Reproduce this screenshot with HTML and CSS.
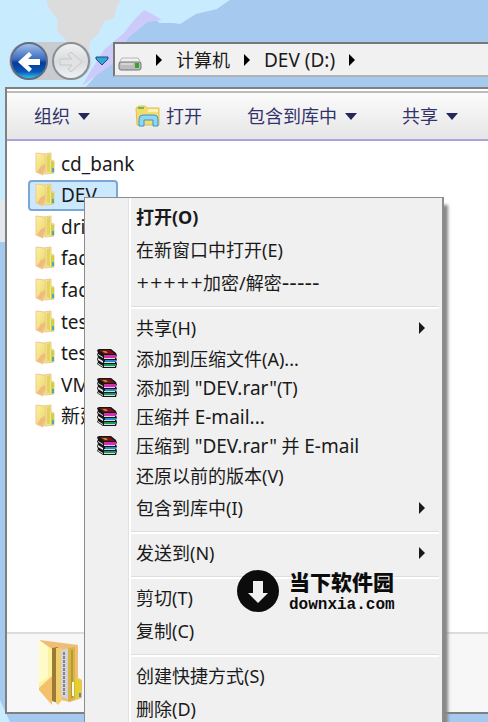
FILE: index.html
```
<!DOCTYPE html>
<html lang="zh-CN">
<head>
    <meta charset="utf-8">
    <title>DEV (D:)</title>
    <link rel="stylesheet" href="styles.css">
</head>
<body>

<!-- shared icons -->
<svg class="defs" width="0" height="0">
    <defs>
        <linearGradient id="yellow" x1="0" y1="0" x2="1" y2="1">
            <stop offset="0" stop-color="#fbf3a4"/>
            <stop offset="1" stop-color="#e8d264"/>
        </linearGradient>
        <symbol id="folder" viewBox="0 0 20 24">
            <path d="M9 2l7-1v7l3 1v12l-9 1z" fill="#f0e596" stroke="#efc98c"/>
            <path d="M12 3l3-1v18h-3z" fill="#e2d65a"/>
            <path d="M1 1l8 1 2 3v12l-3 6-7-3z" fill="url(#yellow)" stroke="#f3c890"/>
            <path d="M2 20l4-6 4-2v4l-3 6z" fill="#eebb80"/>
            <path d="M16 9l3 1v11h-3z" fill="#cfcf4c"/>
            <path d="M17 16h2v4h-2z" fill="#49a9b4"/>
        </symbol>
        <symbol id="rar" viewBox="0 0 20 20">
            <path d="M0 1l2-1h12l5 4 1 3-1 1 1 3-1 1 1 3-1 4H6l-6-4 1-2-1-3 1-2-1-3 1-1z" fill="#151515"/>
            <path d="M2 1h11l5 4H7z" fill="#7c0f1c"/>
            <path d="M5 2h4l2 2H8z" fill="#a79a1e"/>
            <path d="M7 6h12v3H7z" fill="#d42fae"/>
            <path d="M8 11h11v2H8z" fill="#2d86cf"/>
            <path d="M7 15h12v2H7z" fill="#179a5c"/>
            <path d="M1 5l5 3v1L1 6zM1 9l5 3v2l-5-3zM1 14l5 3v1l-5-3z" fill="#e9e9e9"/>
            <path d="M7 9h11v1H7zM7 13h11v1H7zM7 17h11v1H7z" fill="#cfdfe4"/>
        </symbol>
    </defs>
</svg>

<div class="desktop">
    <svg class="wallpaper" width="488" height="722" viewBox="0 0 488 722">
        <path d="M0 0H230L218 8 196 13 181 23 160 23 147 14 130 34 112 48 104 66 92 80 85 88H0z" fill="#c9ebfe"/>
        <path d="M153 0H228L217 9 196 14 180 24 160 21 150 10z" fill="#c9ebfe"/>
        <path d="M46 0H121L117 6 114 18 104 22 98 34 90 42 88 60H73L66 40 57 31 58 20 50 10z" fill="#dcdcdc"/>
        <path d="M144 10L152 14 162 20 148 22 138 30 128 38 118 60 90 80 82 86 90 72 104 50 124 33 134 20z" fill="#cccafa"/>
        <path d="M0 88h6v112H0z" fill="#c9ebfe"/>
        <path d="M0 200h6v42H0z" fill="#e4e8ee"/>
        <path d="M0 700l10 22H0z" fill="#c9ebfe"/>
    </svg>

    <div class="navbar">
        <div class="nav-buttons">
            <button class="nav-btn back" aria-label="后退">
                <svg width="38" height="38" viewBox="0 0 38 38">
                    <defs>
                        <linearGradient id="blue" x1="0" y1="0" x2="0" y2="1">
                            <stop offset="0" stop-color="#a9c4ea"/>
                            <stop offset=".45" stop-color="#3a6cc0"/>
                            <stop offset=".55" stop-color="#063a98"/>
                            <stop offset=".8" stop-color="#0a58b8"/>
                            <stop offset="1" stop-color="#35d2f4"/>
                        </linearGradient>
                    </defs>
                    <circle cx="19" cy="19" r="18" fill="url(#blue)" stroke="#5f6d85" stroke-width="2"/>
                    <path d="M8 20L19 10l3 3-4 4h12v6H18l4 4-3 3z" fill="#fff"/>
                </svg>
            </button>
            <button class="nav-btn" aria-label="前进">
                <svg width="38" height="38" viewBox="0 0 38 38">
                    <defs>
                        <linearGradient id="gray" x1="0" y1="0" x2="0" y2="1">
                            <stop offset="0" stop-color="#f2f2f2"/>
                            <stop offset=".5" stop-color="#d9dbde"/>
                            <stop offset="1" stop-color="#f0f2f4"/>
                        </linearGradient>
                    </defs>
                    <circle cx="19" cy="19" r="18" fill="url(#gray)" stroke="#8b8f94" stroke-width="2"/>
                    <path d="M30 20L19 10l-3 3 4 4H8v6h12l-4 4 3 3z" fill="#e2e2e2" stroke="#c6c8ca"/>
                </svg>
            </button>
        </div>
        <svg class="history" width="14" height="10" viewBox="0 0 14 10">
            <path d="M1 1h12v2L7 9 1 3z" fill="#35a6d8" stroke="#1d4a7c"/>
        </svg>
        <div class="address">
            <svg width="24" height="14" viewBox="0 0 24 14">
                <path d="M4 1h16l3 5H1z" fill="#f1f1f1" stroke="#b5b5b5"/>
                <rect x="1" y="5" width="22" height="8" rx="2" fill="#bcbcbc" stroke="#777"/>
                <path d="M3 7h12" stroke="#eee"/>
                <rect x="17" y="6" width="4" height="5" fill="#35a52e"/>
            </svg>
            <i class="arrow"></i>
            <span>计算机</span>
            <i class="arrow"></i>
            <span class="latin">DEV (D:)</span>
            <i class="arrow"></i>
        </div>
    </div>

    <div class="window">
        <div class="toolbar">
            <button>组织 <i class="caret"></i></button>
            <button class="open">
                <svg width="26" height="22" viewBox="0 0 26 22">
                    <path d="M1 3l3-2h6l2 2h12v17H2z" fill="#f3dc6c" stroke="#e0bd62"/>
                    <path d="M3 2h6v2H3z" fill="#6cc04a"/>
                    <path d="M13 4h10v3H13z" fill="#fbf3b0"/>
                    <path d="M4 21v-7q0-4 4-4h11q4 0 4 4v7h-5v-6H9v6z" fill="#8fd6f2" stroke="#3b97c4"/>
                </svg>
                打开
            </button>
            <button>包含到库中 <i class="caret"></i></button>
            <button>共享 <i class="caret"></i></button>
        </div>

        <ul class="files">
            <li><svg class="icon"><use href="#folder"/></svg>cd_bank</li>
            <li class="selected"><svg class="icon"><use href="#folder"/></svg>DEV</li>
            <li><svg class="icon"><use href="#folder"/></svg>dri</li>
            <li><svg class="icon"><use href="#folder"/></svg>fac</li>
            <li><svg class="icon"><use href="#folder"/></svg>fac</li>
            <li><svg class="icon"><use href="#folder"/></svg>tes</li>
            <li><svg class="icon"><use href="#folder"/></svg>tes</li>
            <li><svg class="icon"><use href="#folder"/></svg>VM</li>
            <li><svg class="icon"><use href="#folder"/></svg>新建</li>
        </ul>

        <div class="details">
            <svg width="46" height="70" viewBox="0 0 46 70">
                <path d="M2 2l38 5v33l4 2v18l-12 4-18-4z" fill="#f0bd78"/>
                <path d="M14 10l6-1v56l-6-2z" fill="#9a7a34"/>
                <path d="M18 10l6 0v52l-4 5-2-2z" fill="#f0cf6c"/>
                <path d="M23 12l8-2v52l-8-4z" fill="#d4d4d8"/>
                <path d="M26 14v44" stroke="#85858c" stroke-width="2" stroke-dasharray="3 1"/>
                <path d="M30 10l7-1v52l-7 3z" fill="#d5b548"/>
                <path d="M34 12v48" stroke="#b99a2c" stroke-width="2"/>
                <path d="M37 40l6 2v17l-6 2z" fill="#e4cf2c"/>
                <path d="M35 44v14" stroke="#fffbe8" stroke-width="2"/>
                <path d="M1 2l13 9v56L1 52z" fill="#fbf3a0"/>
                <path d="M1 50l13-12v29L1 52z" fill="#f3c06c"/>
                <path d="M1 2l9 7v30l-9 6z" fill="#fefbc8"/>
                <path d="M41 55h2v4h-2z" fill="#4d8bd0"/>
            </svg>
        </div>
    </div>

    <div class="menu" role="menu">
        <button class="item default">打开(O)</button>
        <button class="item">在新窗口中打开(E)</button>
        <button class="item"><span class="plus">+++++</span>加密/解密<span class="dash">-----</span></button>
        <hr>
        <button class="item sub">共享(H)</button>
        <button class="item rar"><svg><use href="#rar"/></svg><span>添加到压缩文件(A)...</span></button>
        <button class="item rar"><svg><use href="#rar"/></svg><span>添加到 <span class="latin">"DEV.rar"</span>(T)</span></button>
        <button class="item rar"><svg><use href="#rar"/></svg><span>压缩并 <span class="latin">E-mail...</span></span></button>
        <button class="item rar"><svg><use href="#rar"/></svg><span>压缩到 <span class="latin">"DEV.rar"</span> 并 <span class="latin">E-mail</span></span></button>
        <button class="item versions">还原以前的版本(V)</button>
        <button class="item sub">包含到库中(I)</button>
        <hr>
        <button class="item sub">发送到(N)</button>
        <hr>
        <button class="item">剪切(T)</button>
        <button class="item">复制(C)</button>
        <hr>
        <button class="item">创建快捷方式(S)</button>
        <button class="item">删除(D)</button>
    </div>

    <div class="watermark">
        <svg width="42" height="42" viewBox="0 0 42 42">
            <circle cx="21" cy="21" r="21" fill="#0c0c0c"/>
            <path d="M16 11h10v12h5L21 33 11 23h5z" fill="#f0f0f0"/>
        </svg>
        <div>
            <div class="site">当下软件园</div>
            <div class="url">downxia.com</div>
        </div>
    </div>
</div>

</body>
</html>
```

FILE: styles.css
```
* {
    box-sizing: border-box;
}

body {
    margin: 0;
    font-family: "Noto Sans", "Noto Sans CJK SC", sans-serif;
    font-size: 18px;
    line-height: 24px;
    color: #1a1a1a;
}

button {
    border: 0;
    padding: 0;
    background: none;
    color: inherit;
    font: inherit;
    white-space: nowrap;
}

.defs {
    position: absolute;
}

.desktop {
    position: relative;
    display: flex;
    flex-direction: column;
    height: 100vh;
    padding: 41px 0 8px 5px;
    overflow: hidden;
    background: #a6c9ef;
}

.wallpaper {
    position: absolute;
    left: 0;
    top: 0;
}

/* back, forward and the address bar */
.navbar {
    position: relative;
    display: flex;
    align-items: center;
    height: 40px;
    margin-bottom: 6px;
    padding-left: 4px;
}

.nav-buttons {
    display: flex;
    gap: 4px;
    padding: 0 1px;
    border-radius: 20px;
    background: #c8ccd0;
}

.nav-btn {
    width: 38px;
    height: 38px;
}

.nav-btn svg {
    display: block;
}

.history {
    margin: 0 4px;
}

.address {
    flex: 1;
    display: flex;
    align-items: center;
    height: 35px;
    margin-bottom: 3px;
    padding-left: 3px;
    border: 2px solid #777;
    border-right: 0;
    border-bottom-color: #b4b4b4;
    background: #f1f1f1;
    white-space: nowrap;
}

.address svg {
    margin-top: 8px;
}

.latin {
    font-size: 19px;
}

.arrow {
    margin: 0 14px;
    border: 6px solid transparent;
    border-left: 6px solid #000;
    border-right: 0;
}

.window {
    position: relative;
    flex: 1;
    display: flex;
    flex-direction: column;
    border: 2px solid #808080;
    border-right: 0;
    background: #fff;
}

.toolbar {
    display: flex;
    align-items: center;
    gap: 45px;
    height: 52px;
    padding: 4px 0 0 27px;
    border-bottom: 2px solid #aaa3d8;
    background: linear-gradient(#fff 2px, #bbb 2px, #bbb 4px, #fbfbfb 4px, #e6e6e6);
    color: #33336b;
}

.toolbar button {
    display: flex;
    align-items: center;
    gap: 8px;
}

.toolbar .open {
    gap: 5px;
}

.caret {
    border: 6px solid transparent;
    border-top: 7px solid #26265c;
    border-bottom: 0;
}

.files {
    display: grid;
    grid-template-rows: repeat(9, 1fr);
    height: 284px;
    margin: 7px 0 0 21px;
    padding: 0;
    list-style: none;
    font-size: 19px;
}

.files li {
    display: flex;
    align-items: center;
    gap: 6px;
    width: 90px;
    padding-left: 5px;
    border: 2px solid transparent;
    border-radius: 4px;
    white-space: nowrap;
}

.files .selected {
    border-color: #7ba6d8;
    background: #cce8fc;
}

.icon {
    flex-shrink: 0;
    width: 20px;
    height: 24px;
}

.details {
    height: 80px;
    margin-top: auto;
    padding: 4px 0 0 31px;
    border-top: 2px solid #dcdcdc;
    background: #f7f7f7;
}

/* context menu, lies over the window */
.menu {
    position: absolute;
    left: 84px;
    top: 197px;
    width: 360px;
    padding: 2px 3px 8px 2px;
    border: 1px solid #8c8c8c;
    border-width: 1px 2px 1px 1px;
    background: linear-gradient(90deg, #f0f0f0 43px, #e2e2e2 43px, #e2e2e2 44px, #fff 44px, #fff 46px, #f0f0f0 46px);
    box-shadow: 4px 8px 3px #888;
}

.item {
    display: flex;
    align-items: center;
    width: 100%;
    height: 33px;
    padding-left: 49px;
}

.item.default {
    font-weight: bold;
}

.item.rar {
    gap: 19px;
    height: 29px;
    padding-left: 10px;
}

.item.rar svg {
    width: 20px;
    height: 20px;
}

.item.versions {
    height: 31px;
}

.item.sub::after {
    content: "";
    margin: 0 14px 0 auto;
    border: 6px solid transparent;
    border-left: 6px solid #1a1a1a;
    border-right: 0;
}

.plus {
    font: 16px "DejaVu Sans", sans-serif;
}

.dash {
    font: 21px "DejaVu Sans", sans-serif;
}

.menu hr {
    height: 3px;
    margin: 7px 0 2px 44px;
    border: 0;
    border-top: 1px solid #dedede;
    background: #fff;
}

.watermark {
    position: absolute;
    left: 237px;
    top: 569px;
    display: flex;
    align-items: center;
    gap: 10px;
    color: #0c0c0c;
}

.site {
    font: 900 21px/24px "Noto Sans CJK SC", sans-serif;
}

.url {
    margin-top: 4px;
    font: bold 16px/16px "Liberation Mono", monospace;
}
```
